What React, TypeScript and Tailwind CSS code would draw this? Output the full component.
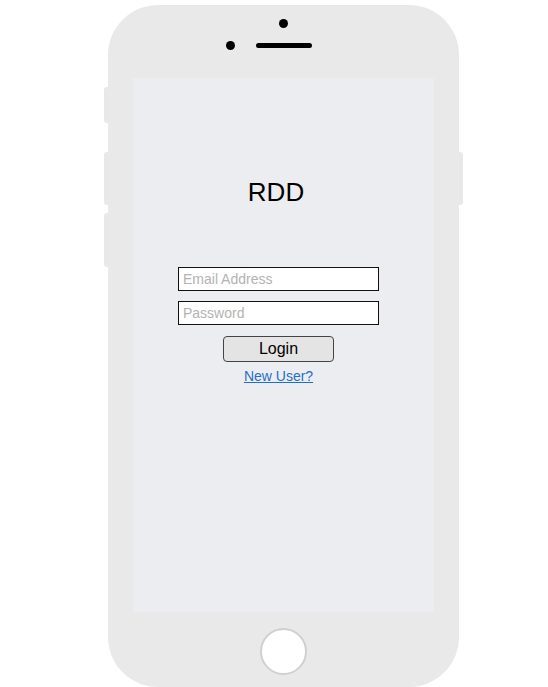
export default function App() {
  return (
    <div className="h-[687px] w-[548px] overflow-hidden bg-white pl-[104px] pt-[5px] font-['Liberation_Sans',Arial,sans-serif]">
      <div className="flex items-start">
        {/* left side buttons */}
        <div className="mt-[82px] flex flex-col">
          <div className="h-[36px] w-[4px] rounded-l-[3px] bg-[#e8e8e8]" />
          <div className="mt-[29px] h-[53px] w-[4px] rounded-l-[3px] bg-[#e8e8e8]" />
          <div className="mt-[8px] h-[54px] w-[4px] rounded-l-[3px] bg-[#e8e8e8]" />
        </div>

        {/* phone body */}
        <div className="flex h-[682px] w-[351px] flex-col items-center rounded-[50px] bg-[#e9e9e9]">
          {/* top bezel */}
          <div className="flex h-[73px] flex-col items-center pt-[14px]">
            <div className="h-[9px] w-[9px] rounded-full bg-black" />
            <div className="mt-[13px] flex items-center gap-[21px] pr-[30px]">
              <div className="h-[9px] w-[9px] rounded-full bg-black" />
              <div className="h-[5px] w-[56px] rounded-full bg-black" />
            </div>
          </div>

          {/* screen */}
          <div className="flex h-[534px] w-[301px] flex-col items-center bg-[#ecedf1] pr-[10px] pt-[99px]">
            <h1 className="mr-[5px] text-[26px] leading-[30px] text-black">RDD</h1>
            <input
              type="text"
              placeholder="Email Address"
              className="mt-[60px] h-[24px] w-[201px] border border-[#111] bg-white px-[4px] text-[14px] outline-none placeholder:text-[#b3b3b3]"
            />
            <input
              type="password"
              placeholder="Password"
              className="mt-[10px] h-[24px] w-[201px] border border-[#111] bg-white px-[4px] text-[14px] outline-none placeholder:text-[#b3b3b3]"
            />
            <button className="mt-[11px] h-[26px] w-[111px] rounded-[4px] border border-[#444] bg-[#e4e4e4] text-[16px] leading-[20px] text-black">
              Login
            </button>
            <a href="#" className="mt-[6px] text-[14px] leading-[16px] text-[#1e6fcf] underline">
              New User?
            </a>
          </div>

          {/* home button */}
          <div className="mt-[16px] h-[47px] w-[47px] rounded-full border-2 border-[#d0d0d0] bg-white" />
        </div>

        {/* right side button */}
        <div className="mt-[147px] h-[53px] w-[4px] rounded-r-[3px] bg-[#e8e8e8]" />
      </div>
    </div>
  );
}
